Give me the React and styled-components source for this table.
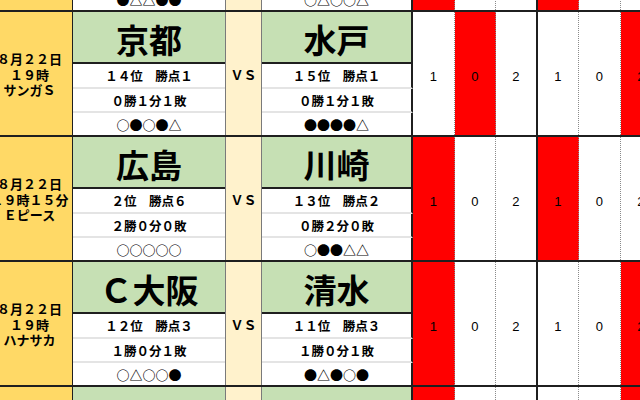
import React from 'react';
import styled, { createGlobalStyle } from 'styled-components';

const colors = {
  date: '#ffd966',
  team: '#c6e0b4',
  vs: '#fff2cc',
  hit: '#ff0000',
  line: '#1f1f1f',
  grayLine: '#7a7a7a',
  softLine: '#e4e4e4',
};

const GlobalStyle = createGlobalStyle`
  html, body {
    margin: 0;
    padding: 0;
    background: #fff;
    overflow: hidden;
  }
  body {
    font-family: "Noto Sans CJK JP", "Noto Sans", sans-serif;
    color: #000;
  }
  * {
    box-sizing: border-box;
  }
`;

// the sheet is scrolled: a bit of the date column and of the match above are cut off
const Sheet = styled.div`
  width: 720px;
  margin-left: -13px;
  margin-top: -113px;
`;

const Block = styled.div`
  display: grid;
  grid-template-columns: 86px 152px 37px 151px repeat(6, 41.5px);
  grid-template-rows: 52px 25px 24px 22px;
  border-bottom: 2px solid ${colors.line};
`;

const DateCell = styled.div`
  grid-column: 1;
  grid-row: 1 / -1;
  background: ${colors.date};
  border-right: 1px solid ${colors.line};
  display: flex;
  flex-direction: column;
  align-items: center;
  justify-content: center;
  font-size: 13px;
  font-weight: 700;
  line-height: 15.5px;
  white-space: nowrap;
  padding-top: 2px;
`;

const TeamName = styled.div`
  grid-column: ${(p) => p.$col};
  grid-row: 1;
  background: ${colors.team};
  border-bottom: 2px solid ${colors.line};
  border-right: ${(p) => (p.$edge ? `2px solid ${colors.line}` : 'none')};
  display: flex;
  align-items: center;
  justify-content: center;
  font-size: 33px;
  font-weight: 700;
  padding-top: 4px;
`;

const StatCell = styled.div`
  grid-column: ${(p) => p.$col};
  grid-row: ${(p) => p.$row};
  background: #fff;
  border-bottom: ${(p) => (p.$last ? 'none' : `2px solid ${colors.softLine}`)};
  border-right: ${(p) => (p.$edge ? `2px solid ${colors.line}` : 'none')};
  display: flex;
  align-items: center;
  justify-content: center;
  font-size: ${(p) => (p.$marks ? '13px' : '12.5px')};
  font-weight: 700;
  white-space: nowrap;
`;

const VsCell = styled.div`
  grid-column: 3;
  grid-row: 1 / -1;
  background: ${colors.vs};
  border-left: 1px solid ${colors.grayLine};
  border-right: 1px solid ${colors.grayLine};
  display: flex;
  align-items: center;
  justify-content: center;
  font-size: 13px;
  font-weight: 700;
  padding-top: 2px;
`;

const PickCell = styled.div`
  grid-column: ${(p) => p.$col};
  grid-row: 1 / -1;
  background: ${(p) => (p.$hit ? colors.hit : '#fff')};
  border-right: ${(p) =>
    p.$groupEnd ? `2px solid ${colors.line}` : `1px dotted #8a8a8a`};
  display: flex;
  align-items: center;
  justify-content: center;
  padding-top: 6px;
  font-family: "Liberation Sans", Arial, sans-serif;
  font-size: 13px;
`;

const picks = ['1', '0', '2', '1', '0', '2'];

const matches = [
  {
    date: ['８月２２日', '１９時', ''],
    home: { name: '', stats: ['', '', '●△△●●'] },
    away: { name: '', stats: ['', '', '○△○○△'] },
    hits: [0, 3],
  },
  {
    date: ['８月２２日', '１９時', 'サンガＳ'],
    home: { name: '京都', stats: ['１４位　勝点１', '０勝１分１敗', '○●○●△'] },
    away: { name: '水戸', stats: ['１５位　勝点１', '０勝１分１敗', '●●●●△'] },
    hits: [1, 5],
  },
  {
    date: ['８月２２日', '１９時１５分', 'Ｅピース'],
    home: { name: '広島', stats: ['２位　勝点６', '２勝０分０敗', '○○○○○'] },
    away: { name: '川崎', stats: ['１３位　勝点２', '０勝２分０敗', '○●●△△'] },
    hits: [0, 3],
  },
  {
    date: ['８月２２日', '１９時', 'ハナサカ'],
    home: { name: 'Ｃ大阪', stats: ['１２位　勝点３', '１勝０分１敗', '○△○○●'] },
    away: { name: '清水', stats: ['１１位　勝点３', '１勝０分１敗', '●△●○●'] },
    hits: [0, 5],
  },
  {
    date: ['', '', ''],
    home: { name: '', stats: ['', '', ''] },
    away: { name: '', stats: ['', '', ''] },
    hits: [0, 5],
  },
];

const Team = ({ team, col, edge }) => (
  <>
    <TeamName $col={col} $edge={edge}>{team.name}</TeamName>
    {team.stats.map((s, i) => (
      <StatCell key={i} $col={col} $row={i + 2} $last={i === 2} $marks={i === 2} $edge={edge}>
        {s}
      </StatCell>
    ))}
  </>
);

const Match = ({ match }) => (
  <Block>
    <DateCell>
      {match.date.map((line, i) => (
        <div key={i}>{line || '\u00a0'}</div>
      ))}
    </DateCell>
    <Team team={match.home} col={2} />
    <VsCell>ＶＳ</VsCell>
    <Team team={match.away} col={4} edge />
    {picks.map((n, i) => (
      <PickCell key={i} $col={i + 5} $hit={match.hits.includes(i)} $groupEnd={i === 2}>
        {n}
      </PickCell>
    ))}
  </Block>
);

const App = () => (
  <>
    <GlobalStyle />
    <Sheet>
      {matches.map((m, i) => (
        <Match key={i} match={m} />
      ))}
    </Sheet>
  </>
);

export default App;
